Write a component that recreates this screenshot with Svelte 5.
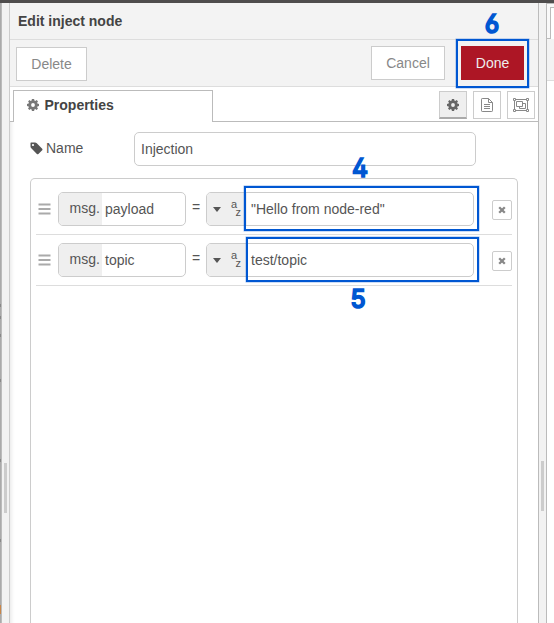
<script>
  const rows = [
    { key: 'payload', value: '"Hello from node-red"' },
    { key: 'topic', value: 'test/topic' }
  ];
  const ports = [304, 316, 334, 379, 459, 539];
</script>

{#snippet gear()}
  <svg class="gear" viewBox="0 0 12 12"><path fill="currentColor" fill-rule="evenodd" d="M4.900 0H7.100L7.400 1.600L8.300 2L9.700 1.100L11 2.400L10.100 3.800L10.400 4.600L12 4.900V7.100L10.400 7.400L10.100 8.300L11 9.600L9.600 11L8.300 10.100L7.400 10.400L7.100 12H4.900L4.600 10.400L3.700 10.100L2.400 11L1 9.600L1.900 8.300L1.600 7.400L0 7.100V4.900L1.600 4.600L2 3.800L1.100 2.400L2.400 1.100L3.700 2L4.600 1.600ZM6 4.100A1.900 1.900 0 1 0 6 7.900A1.900 1.900 0 1 0 6 4.100Z"/></svg>
{/snippet}

<div class="app">
  <div class="topbar"></div>
  <div class="body">
    <div class="canvas">
      {#each ports as y}<i style="top:{y}px"></i>{/each}
      <i class="node"></i>
    </div>
    <div class="handle left"><span></span></div>
    <main>
      <header>Edit inject node</header>
      <div class="toolbar">
        <button class="delete">Delete</button>
        <div class="actions">
          <button class="cancel">Cancel</button>
          <button class="done">Done</button>
        </div>
      </div>
      <div class="tabs">
        <div class="tab">{@render gear()}<span>Properties</span></div>
        <div class="rest">
          <div class="iconbtn active">{@render gear()}</div>
          <div class="iconbtn">
            <svg width="12" height="14" viewBox="0 0 12 14" fill="none" stroke="#888"><path d="M.5 1.2Q.5.5 1.2.5H7.500L11.500 4.500V12.800Q11.500 13.500 10.800 13.500H1.200Q.5 13.500.5 12.800ZM7.500.5V4.500H11.500M3 6.500H9M3 8.500H9M3 10.500H9"/></svg>
          </div>
          <div class="iconbtn">
            <svg width="16" height="14" viewBox="0 0 16 14" fill="none" stroke="#888"><path d="M2.500 1.500H13.500M2.500 12.500H13.500M1.500 2.500V11.500M14.500 2.500V11.500"/><path d="M.5.5h2v2h-2zM13.500.5h2v2h-2zM.5 11.500h2v2h-2zM13.500 11.500h2v2h-2zM3.500 3.500h6v5h-6zM9.500 5.500h3v5h-6v-2"/></svg>
          </div>
        </div>
      </div>
      <div class="form">
        <div class="field">
          <div class="label">
            <svg width="13" height="13" viewBox="0 0 13 13"><path fill="#555" fill-rule="evenodd" d="M1 .5H5Q6 .5 6.800 1.300L12.200 6.700Q12.900 7.400 12.200 8.200L8.400 12Q7.600 12.700 6.900 12L1.300 6.300Q.5 5.500.5 4.600V1Q.5.5 1 .5ZM3 1.900A1.100 1.100 0 1 0 3 4.100A1.100 1.100 0 1 0 3 1.900Z"/></svg>
            <span>Name</span>
          </div>
          <div class="input name">Injection</div>
        </div>
        <div class="list">
          {#each rows as row}
            <div class="row">
              <svg class="grip" width="13" height="12" viewBox="0 0 13 12"><path d="M.5 1.500H12.500M.5 6H12.500M.5 10.500H12.500" stroke="#aaa" stroke-width="1.800"/></svg>
              <div class="input prop"><span class="prefix">msg.</span><span class="text">{row.key}</span></div>
              <span class="eq">=</span>
              <div class="input typed">
                <span class="type"><i class="caret"></i><span class="az"><b>a</b><b>z</b></span></span>
                <span class="text">{row.value}</span>
              </div>
              <div class="remove"><svg width="8" height="8" viewBox="0 0 8 8"><path d="M1.200 1.200L6.800 6.800M6.800 1.200L1.200 6.800" stroke="#888" stroke-width="2.300"/></svg></div>
            </div>
          {/each}
        </div>
      </div>
    </main>
    <div class="handle right"><span></span></div>
    <aside><div class="sidetabs"><div></div></div><div class="sidebar"></div></aside>
  </div>

  <div class="mark m6"></div>
  <div class="mark m4"></div>
  <div class="mark m5"></div>
  <span class="num n6">6</span>
  <span class="num n4">4</span>
  <span class="num n5">5</span>
</div>

<style>
  :global(body) { margin: 0; background: #fff; }
  .app, .app * { box-sizing: border-box; }
  .app { position: relative; width: 554px; height: 623px; overflow: hidden; display: flex; flex-direction: column; font: 14px/20px "Liberation Sans", Arial, sans-serif; color: #555; }
  .topbar { height: 3px; background: #4f4d4d; flex: none; }
  .body { flex: 1; display: flex; min-height: 0; }
  .canvas { width: 2px; background: #aaa; border-right: 1px solid #bbb; }
  .canvas i { position: absolute; left: 0; width: 1px; height: 3px; background: #888; }
  .canvas .node { top: 605px; height: 9px; background: #c98547; }
  .handle { background: #f2f2f2; display: flex; justify-content: center; }
  .handle span { width: 3px; height: 50px; background: #ccc; }
  .left { width: 8px; border-right: 1px solid #ccc; }
  .left span { margin-top: 460px; }
  .right { width: 9px; border: solid #bbb; border-width: 0 1px; }
  .right span { margin-top: 458px; }
  main { width: 528px; display: flex; flex-direction: column; }
  header { height: 37px; background: #f3f3f3; border-bottom: 1px solid #ddd; padding: 8px 8px 0; font-weight: bold; color: #444; }
  .toolbar { height: 47px; background: #f3f3f3; border-bottom: 1px solid #ddd; padding: 6px 14px 0 6px; display: flex; justify-content: space-between; }
  .actions { display: flex; gap: 16px; }
  button { font: inherit; height: 34px; border: 1px solid #ccc; background: #fff; color: #888; padding: 0; border-radius: 0; }
  .delete { width: 71px; margin-top: 1px; }
  .cancel { width: 74px; }
  .done { width: 63px; background: #ad1625; border-color: #ad1625; color: #eee; }
  .tabs { height: 35px; padding-top: 3px; display: flex; flex: none; }
  .tabs::before { content: ""; width: 3px; border-bottom: 1px solid #bbb; }
  .tab { width: 200px; border: 1px solid #bbb; border-bottom: 0; display: flex; padding: 4px 13px 4px 12.500px; gap: 6px; font-weight: bold; color: #444; }
  .gear { width: 12px; height: 12px; }
  .tab .gear { color: #777; margin-top: 4px; }
  .rest { flex: 1; display: flex; justify-content: flex-end; gap: 6px; border-bottom: 1px solid #bbb; padding: 1px 3px 0 0; }
  .iconbtn { width: 28px; height: 28px; border: 1px solid #ccc; display: flex; align-items: center; justify-content: center; color: #666; }
  .active { background: #efefef; border-bottom: 2px solid #aaa; }
  .form { flex: 1; padding: 10px 20px 0; display: flex; flex-direction: column; gap: 12px; box-shadow: inset 5px 0 4px -4px #e4e4e4; }
  .field { display: flex; }
  .label { width: 104px; display: flex; gap: 3px; padding-top: 6px; }
  .label svg { margin-top: 4px; }
  .input { height: 34px; border: 1px solid #ccc; border-radius: 5px; background: #fff; display: flex; line-height: 32px; overflow: hidden; white-space: nowrap; }
  .name { width: 342px; padding-left: 6px; }
  .list { width: 488px; flex: 1; border: 1px solid #ccc; border-bottom: 0; border-radius: 5px 5px 0 0; padding: 5px; }
  .row { height: 51px; border-bottom: 1px solid #ddd; padding-top: 8px; display: flex; }
  .grip { margin: 11px 7px 0 2px; flex: none; }
  .prop { width: 128px; }
  .prefix { width: 43px; background: #efefef; padding-left: 10.500px; line-height: 30px; }
  .prop .text { padding-left: 3px; }
  .eq { width: 20px; text-align: center; line-height: 30px; }
  .typed { width: 268px; }
  .type { width: 40px; background: #efefef; display: flex; padding-left: 6px; }
  .caret { width: 0; height: 0; border: 4.500px solid transparent; border-top: 5px solid #555; border-bottom: 0; margin-top: 14px; }
  .az { display: flex; margin: 6px 0 0 10px; font-size: 11px; line-height: 11px; }
  .az b { font-weight: normal; width: 4.500px; }
  .az b + b { margin-top: 8px; }
  .typed .text { padding-left: 4px; }
  .remove { width: 20px; height: 20px; border: 1px solid #ccc; border-radius: 2px; margin: 8px 0 0 18px; display: flex; align-items: center; justify-content: center; }
  aside { width: 7px; background: #fff; }
  .sidetabs { height: 36px; background: #f9f9f9; border-top: 1px solid #bbb; display: flex; }
  .sidetabs::before { content: ""; width: 3px; border-bottom: 1px solid #bbb; }
  .sidetabs div { flex: 1; margin-top: 3px; border: 1px solid #bbb; border-width: 1px 0 0 1px; background: #fff; }
  .sidebar { height: 42px; background: #f3f3f3; border-bottom: 1px solid #ddd; }
  .mark { position: absolute; border: 2px solid #0057d2; box-shadow: 0 0 0 .5px #0057d266; }
  .m6 { left: 456px; top: 39px; width: 73px; height: 49px; }
  .m4 { left: 244px; top: 186px; width: 235px; height: 45px; }
  .m5 { left: 246px; top: 237px; width: 233px; height: 45px; }
  .num { position: absolute; width: 20px; text-align: center; font: 500 26px/30px Inter, sans-serif; font-feature-settings: "ss01"; color: #0057d2; -webkit-text-stroke: 1.700px #0057d2; stroke-linejoin: round; transform: scaleX(.94); }
  .n6 { left: 482px; top: 9px; }
  .n4 { left: 350px; top: 153px; }
  .n5 { left: 348px; top: 284px; }
</style>
